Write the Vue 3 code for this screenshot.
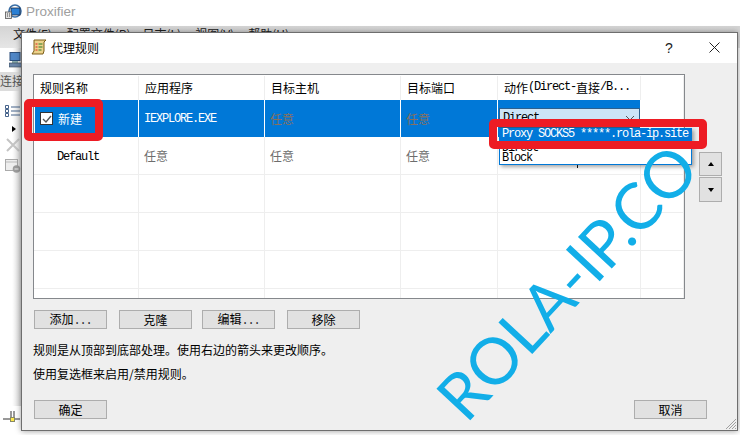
<script setup>
const plainHeaders = ['规则名称', '应用程序', '目标主机', '目标端口']
const emptyRows = [1, 2, 3]
const menus = ['文件(F)', '配置文件(R)', '日志(L)', '视图(V)', '帮助(H)']
</script>

<template>
  <div class="screen">
    <div class="app">
      <div class="app-title">
        <svg class="app-icon" viewBox="0 0 17 15" width="17" height="15">
          <circle cx="10" cy="7" r="6" fill="none" stroke="#3a6ea5" stroke-width="1.6" />
          <rect x="6" y="4" width="9" height="7" fill="#2a7fd4" stroke="#1b2a44" stroke-width="0.8" />
          <rect x="0.5" y="8" width="6" height="6.5" fill="#e2e2e2" stroke="#555" stroke-width="0.8" />
          <path d="M2 10h1M4 10h1M2 12h1M4 12h1" stroke="#444" />
        </svg>
        <span>Proxifier</span>
      </div>
      <div class="app-menu">
        <span v-for="m in menus" :key="m" class="menu-item">{{ m }}</span>
      </div>
      <div class="app-side">
        <svg class="side-pc" viewBox="0 0 14 16" width="14" height="16">
          <rect x="1" y="0.5" width="10" height="8" fill="#4f86c6" stroke="#2d4f7c" />
          <rect x="3" y="9" width="6" height="2" fill="#8aa" />
          <rect x="0" y="11" width="14" height="4" fill="#6b86a8" stroke="#345" stroke-width="0.6" />
        </svg>
        <div class="side-tab">连接</div>
        <svg class="side-list" viewBox="0 0 16 13" width="16" height="13">
          <path d="M0.5 0.5h3v3h-3zM0.5 4.5h3v3h-3zM0.5 8.5h3v3h-3z" fill="none" stroke="#45628a" />
          <path d="M6 2h9M6 6h9M6 10h9" stroke="#45628a" />
        </svg>
        <div class="side-tri"></div>
        <svg class="side-x" viewBox="0 0 14 14" width="14" height="14">
          <path d="M1 1l12 12M13 1L1 13" stroke="#c4c4c4" stroke-width="2" />
        </svg>
        <svg class="side-box" viewBox="0 0 16 16" width="16" height="16">
          <rect x="0.5" y="1.5" width="12" height="11" fill="#eee" stroke="#aaa" />
          <path d="M1 4h11" stroke="#bbb" />
          <circle cx="11.5" cy="11" r="3.8" fill="#9c9c9c" />
          <path d="M9.5 11h4" stroke="#eee" />
        </svg>
      </div>
      <svg class="app-corner" viewBox="0 0 18 14" width="18" height="14">
        <path d="M0 9h17M8 1v8M11 1v8" stroke="#333" />
        <rect x="7.5" y="7.5" width="4" height="4" fill="#ffe94a" stroke="#886" />
      </svg>
    </div>

    <section class="dialog">
      <header class="dlg-title">
        <svg class="scroll-icon" viewBox="0 0 16 16" width="16" height="16">
          <path d="M3 1h12l-2 2v9l-1 3H1l2-3z" fill="#ecd28a" stroke="#7a5c18" />
          <path d="M4.5 5h2M4.5 8h2M4.5 11h2" stroke="#d22" />
          <path d="M7.5 5h4M7.5 8h4M7.5 11h3" stroke="#2a7a2a" />
        </svg>
        <span class="dlg-name">代理规则</span>
        <span class="dlg-help">?</span>
        <svg class="dlg-close" viewBox="0 0 11 11" width="11" height="11">
          <path d="M0.5 0.5l10 10M10.5 0.5l-10 10" stroke="#222" />
        </svg>
      </header>

      <div class="dlg-body">
        <div class="table-row-wrap">
          <div class="table">
            <div class="row head">
              <div v-for="h in plainHeaders" :key="h" class="cell">{{ h }}</div>
              <div class="cell">动作<span class="mono-dark">(Direct-</span>直接<span class="mono-dark">/B...</span></div>
              <div class="cell"></div>
            </div>
            <div class="row selected">
              <div class="cell first">
                <span class="check">
                  <svg viewBox="0 0 10 10" width="10" height="10">
                    <path d="M1 5l3 3 5-6" fill="none" stroke="#555" stroke-width="1.4" />
                  </svg>
                </span>
                <span class="cn-white">新建</span>
              </div>
              <div class="cell mono">IEXPLORE.EXE</div>
              <div class="cell muted">任意</div>
              <div class="cell muted">任意</div>
              <div class="cell"></div>
              <div class="cell blank"></div>
            </div>
            <div class="row">
              <div class="cell first"><span class="mono-dark default">Default</span></div>
              <div class="cell any">任意</div>
              <div class="cell any">任意</div>
              <div class="cell any">任意</div>
              <div class="cell"></div>
              <div class="cell"></div>
            </div>
            <div v-for="r in emptyRows" :key="r" class="row">
              <div v-for="c in 6" :key="c" class="cell"></div>
            </div>
            <div class="row last">
              <div v-for="c in 6" :key="c" class="cell"></div>
            </div>
          </div>
          <div class="arrows">
            <button class="arrow"><i class="up"></i></button>
            <button class="arrow tall"><i class="down"></i></button>
          </div>
        </div>

        <div class="buttons">
          <button class="btn">添加<span class="dots">...</span></button>
          <button class="btn">克隆</button>
          <button class="btn">编辑<span class="dots">...</span></button>
          <button class="btn">移除</button>
        </div>

        <p class="note">规则是从顶部到底部处理。使用右边的箭头来更改顺序。</p>
        <p class="note second">使用复选框来启用/禁用规则。</p>

        <div class="footer">
          <button class="btn">确定</button>
          <button class="btn">取消</button>
        </div>
      </div>
      <svg class="grip" viewBox="0 0 12 12" width="12" height="12">
        <path d="M11 1L1 11M11 4L4 11M11 7L7 11M11 10L10 11" stroke="#a0a0a0" />
      </svg>
    </section>

    <div class="combo">
      <div class="combo-field">
        <span>Direct</span>
        <svg viewBox="0 0 10 6" width="10" height="6"><path d="M1 1l4 4 4-4" fill="none" stroke="#555" /></svg>
      </div>
      <div class="combo-list">
        <div class="opt sel">Proxy SOCKS5 *****.rola-ip.site</div>
        <div class="opt direct">Direct</div>
        <div class="opt block">Block</div>
      </div>
    </div>
    <i class="peek"></i>

    <div class="mark mark-name"></div>
    <div class="mark mark-proxy"></div>
    <div class="watermark">ROLA-IP.CO</div>
  </div>
</template>

<style>
html, body { margin: 0; background: #fff; }
</style>

<style scoped>
.screen {
  position: relative;
  width: 740px;
  height: 435px;
  overflow: hidden;
  background: #fff;
  font-family: "Noto Sans CJK SC", "Liberation Sans", sans-serif;
  font-size: 12px;
  color: #000;
}
.app { position: absolute; inset: 0; background: #fff; }
.app-title {
  display: flex;
  align-items: center;
  gap: 4px;
  height: 26px;
  padding: 0 0 4px 5px;
  box-sizing: border-box;
  font-family: "Liberation Sans", sans-serif;
  font-size: 13.5px;
  color: #a0a0a0;
}
.app-menu {
  display: flex;
  height: 22px;
  padding-left: 13px;
  background: linear-gradient(#d4d4d4, #e6e6e6);
  line-height: 16px;
  white-space: nowrap;
  color: #222;
}
.menu-item { margin-right: 14px; }
.menu-item:first-child { margin-right: 15px; }
.menu-item:nth-child(2) { margin-right: 12px; }
.app-side {
  position: absolute;
  left: 0;
  top: 48px;
  width: 22px;
  height: 358px;
  background: linear-gradient(90deg, #fff 0 55%, #d2d2d2 100%);
}
.side-pc { position: absolute; left: 9px; top: 4px; }
.side-tab { position: absolute; left: 0; top: 24px; width: 22px; height: 19px; overflow: hidden; background: #dcdcdc; font-size: 12px; line-height: 18px; color: #555; white-space: nowrap; }
.side-list { position: absolute; left: 5px; top: 57px; }
.side-tri { position: absolute; left: 12px; top: 78px; border-left: 4px solid #000; border-top: 3px solid transparent; border-bottom: 3px solid transparent; }
.side-x { position: absolute; left: 6px; top: 90px; }
.side-box { position: absolute; left: 5px; top: 110px; }
.app-corner { position: absolute; left: 3px; top: 410px; }

.dialog {
  position: absolute;
  left: 21px;
  top: 32px;
  width: 717px;
  height: 399px;
  box-sizing: border-box;
  border: 1px solid #6e6e6e;
  background: #efefef;
  box-shadow: 0 0 6px rgba(0, 0, 0, 0.4);
}
.dlg-title {
  display: flex;
  align-items: center;
  height: 30px;
  background: #fff;
  padding: 0 0 0 9px;
}
.scroll-icon { margin: 0 4px 2px 0; }
.dlg-name { flex: 1; padding-bottom: 2px; }
.dlg-help { width: 12px; margin-right: 32px; padding-bottom: 1px; font-size: 14px; font-family: "Liberation Sans", sans-serif; color: #222; }
.dlg-close { margin: 0 17px 2px 0; }
.dlg-body { padding: 11px 11px 0; }

.table-row-wrap { display: flex; align-items: flex-start; }
.table {
  box-sizing: border-box;
  width: 652px;
  height: 225px;
  background: #fff;
  border: 1px solid #85888c;
  overflow: hidden;
}
.row {
  display: grid;
  grid-template-columns: 105px 126px 136px 97px 143px 1fr;
  height: 38px;
  box-sizing: border-box;
  border-bottom: 1px solid #eee;
}
.row.head { height: 25px; border-bottom: 0; padding-top: 1px; }
.row.selected { height: 37px; border-bottom: 0; }
.row.last { border-bottom: 0; }
.cell {
  box-sizing: border-box;
  border-right: 1px solid #eee;
  display: flex;
  align-items: center;
  padding-left: 5px;
  white-space: nowrap;
  overflow: hidden;
}
.head .cell { padding: 0 0 2px 6px; }
.selected .cell { background: #0078d7; border-right-color: #fff; }
.selected .cell.blank { background: #fff; border-right-color: #eee; }
.selected .first { border-left: 1px solid #fff; padding-left: 5px; }
.first { padding-left: 6px; gap: 5px; }
.check {
  display: flex;
  align-items: center;
  justify-content: center;
  box-sizing: border-box;
  width: 13px;
  height: 13px;
  background: #fff;
  border: 1px solid #333;
}
.cn-white { color: #fff; }
.mono, .mono-dark, .dots {
  font-family: "Liberation Mono", monospace;
  font-size: 12px;
  letter-spacing: -1.2px;
}
.mono { color: #fff; }
.default { margin-left: 17px; padding-top: 2px; }
.dots { color: #333; }
.muted { color: #87705f; }
.any { color: #6d6d6d; }

.arrows { display: flex; flex-direction: column; gap: 1px; margin: 78px 0 0 14px; }
.arrow {
  box-sizing: border-box;
  width: 23px;
  height: 24px;
  padding: 0;
  background: #e1e1e1;
  border: 1px solid #adadad;
  display: flex;
  align-items: center;
  justify-content: center;
}
.arrow.tall { height: 25px; }
.up { border-bottom: 4px solid #000; border-left: 3px solid transparent; border-right: 3px solid transparent; }
.down { border-top: 4px solid #000; border-left: 3px solid transparent; border-right: 3px solid transparent; }

.buttons { display: flex; gap: 12px; margin: 11px 0 0 1px; }
.buttons .btn:nth-child(2) { margin-right: -2px; }
.btn {
  box-sizing: border-box;
  width: 73px;
  height: 19px;
  padding: 0;
  background: #e1e1e1;
  border: 1px solid #adadad;
  font: inherit;
  line-height: 16px;
  color: #000;
}
.note { margin: 14px 0 0; height: 14px; line-height: 14px; }
.note.second { margin-top: 10px; }
.footer { display: flex; justify-content: space-between; margin: 19px 0 0 1px; width: 673px; }
.grip { position: absolute; right: 0; bottom: 0; }

.combo { position: absolute; left: 499px; top: 108px; width: 193px; }
.combo-field {
  display: flex;
  align-items: center;
  justify-content: space-between;
  box-sizing: border-box;
  width: 141px;
  height: 20px;
  padding: 0 4px 0 3px;
  background: #cce4f7;
  border: 1px solid #2d5f8d;
  font-family: "Liberation Mono", monospace;
  font-size: 12px;
  letter-spacing: -1.2px;
}
.combo-list {
  box-sizing: border-box;
  height: 37px;
  background: #fff;
  border: 1px solid #0078d7;
  border-top: 0;
  box-shadow: 2px 2px 4px rgba(0, 0, 0, 0.35);
  font-family: "Liberation Mono", monospace;
  font-size: 12px;
  letter-spacing: -1.2px;
}
.opt { padding-left: 2px; white-space: nowrap; }
.opt.sel { background: #0078d7; color: #fff; height: 13px; line-height: 13px; }
.opt.direct { height: 12px; line-height: 14px; }
.opt.block { height: 11px; line-height: 11px; }
.peek { position: absolute; left: 577px; top: 165px; width: 1px; height: 3px; background: #111; }

.mark { position: absolute; box-sizing: border-box; border: 8px solid #ed1c24; border-radius: 5px; }
.mark-name { left: 24px; top: 99px; width: 79px; height: 42px; }
.mark-proxy { left: 489px; top: 119px; width: 218px; height: 30px; }

.watermark {
  position: absolute;
  left: 394px;
  top: 248px;
  width: 340px;
  text-align: center;
  font-family: Lato, sans-serif;
  font-size: 64.5px;
  letter-spacing: -0.5px;
  line-height: 70px;
  color: #12aee8;
  transform: rotate(-47deg);
  white-space: nowrap;
}
</style>
